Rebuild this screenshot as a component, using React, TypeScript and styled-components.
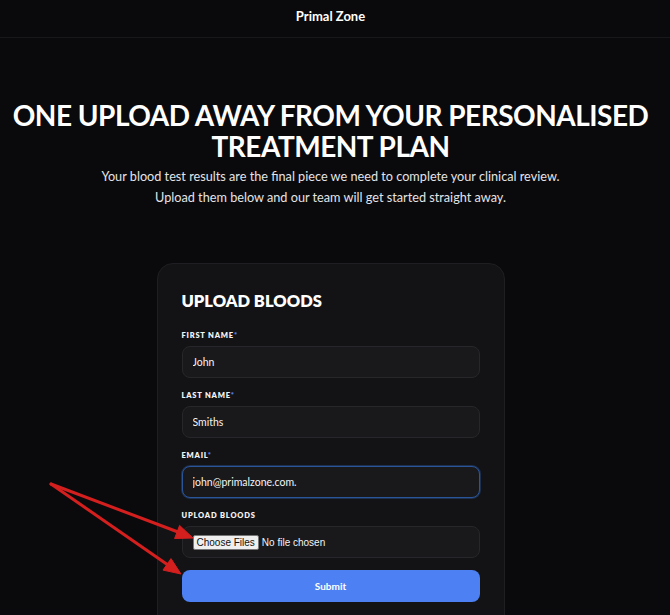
import React from "react";
import styled, { createGlobalStyle } from "styled-components";

const GlobalStyle = createGlobalStyle`
  * { box-sizing: border-box; }
  body {
    margin: 0;
    background: #0a0a0c;
    font-family: "Lato", "Noto Sans", sans-serif;
    color: #fff;
  }
`;

const App = () => {
  return (
    <Page>
      <GlobalStyle />
      <Header>
        <Inner>Primal Zone</Inner>
      </Header>
      <Inner>
        <Hero>
          <Headline>
            One upload away from your personalised
            <br />
            treatment plan
          </Headline>
          <Intro>
            Your blood test results are the final piece we need to complete your clinical review.
            <br />
            Upload them below and our team will get started straight away.
          </Intro>
        </Hero>
        <Card>
          <CardTitle>Upload Bloods</CardTitle>
          <Field>
            <Label>
              First Name<Star>*</Star>
            </Label>
            <TextInput defaultValue="John" />
          </Field>
          <Field>
            <Label>
              Last Name<Star>*</Star>
            </Label>
            <TextInput defaultValue="Smiths" />
          </Field>
          <Field>
            <Label>
              Email<Star>*</Star>
            </Label>
            <TextInput defaultValue="john@primalzone.com." $focused />
          </Field>
          <Field>
            <Label>Upload Bloods</Label>
            <FileBox>
              <FileButton>Choose Files</FileButton>
              <FileText>No file chosen</FileText>
            </FileBox>
          </Field>
          <SubmitButton>Submit</SubmitButton>
        </Card>
      </Inner>
      <Arrows width="670" height="615" viewBox="0 0 670 615">
        <g fill="#d41f1f" stroke="#d41f1f" strokeLinejoin="round">
          <line x1="51" y1="484" x2="178" y2="532" strokeWidth="3" strokeLinecap="round" />
          <polygon points="193,538 174.6,538.5 179.6,525.4" strokeWidth="1" />
          <line x1="51" y1="484" x2="168" y2="565" strokeWidth="3" strokeLinecap="round" />
          <polygon points="181,574 163,570.1 171,558.6" strokeWidth="1" />
        </g>
      </Arrows>
    </Page>
  );
};

export default App;

const Page = styled.div`
  position: relative;
  height: 615px;
  overflow: hidden;
  background: #0a0a0c;
`;

const Inner = styled.div`
  width: 661px;
  display: flex;
  flex-direction: column;
  align-items: center;
`;

const Header = styled.div`
  height: 38px;
  padding-bottom: 6px;
  display: flex;
  align-items: center;
  font-size: 13px;
  font-weight: 700;
  border-bottom: 1px solid #18181b;
`;

const Hero = styled.div`
  padding-top: 62px;
  display: flex;
  flex-direction: column;
  align-items: center;
  text-align: center;
`;

const Headline = styled.h1`
  margin: 0;
  font-size: 28px;
  line-height: 31px;
  font-weight: 700;
  letter-spacing: -0.5px;
  text-transform: uppercase;
  white-space: nowrap;
`;

const Intro = styled.p`
  margin: 4px 0 0;
  font-size: 12.7px;
  line-height: 21px;
  color: #e4e4e7;
`;

const Card = styled.div`
  width: 348px;
  margin-top: 55px;
  padding: 26px 24px 40px;
  background: #131315;
  border: 1px solid #1f1f23;
  border-radius: 16px;
  display: flex;
  flex-direction: column;
  align-self: center;
  align-items: stretch;
`;

const CardTitle = styled.h2`
  margin: 0 0 18px;
  font-size: 16.5px;
  line-height: 22px;
  font-weight: 800;
  text-transform: uppercase;
`;

const Field = styled.div`
  display: flex;
  flex-direction: column;
  gap: 5px;
  margin-bottom: 12px;
`;

const Label = styled.label`
  font-size: 7.5px;
  line-height: 11px;
  font-weight: 800;
  letter-spacing: 0.8px;
  text-transform: uppercase;
  color: #f4f4f5;
`;

const Star = styled.span`
  color: #4f7ff0;
`;

const TextInput = styled.input<{ $focused?: boolean }>`
  height: 32px;
  padding: 0 10px;
  background: #19191c;
  border: 1px solid ${(p) => (p.$focused ? "#2b5599" : "#27272b")};
  box-shadow: ${(p) => (p.$focused ? "0 0 0 1px rgba(43, 85, 153, 0.45)" : "none")};
  border-radius: 8px;
  font-family: "Lato", sans-serif;
  font-size: 10.5px;
  color: #f4f4f5;
  outline: none;
`;

const FileBox = styled.div`
  height: 32px;
  padding: 0 10px;
  display: flex;
  align-items: center;
  gap: 3px;
  background: #19191c;
  border: 1px solid #27272b;
  border-radius: 8px;
  font-family: "Liberation Sans", Arial, sans-serif;
  font-size: 10px;
`;

const FileButton = styled.span`
  padding: 1px 3px;
  background: #efefef;
  color: #111;
  border: 1px solid #767676;
  border-radius: 2px;
  line-height: 11px;
`;

const FileText = styled.span`
  color: #f4f4f5;
`;

const SubmitButton = styled.button`
  height: 32px;
  border: none;
  border-radius: 8px;
  background: #4d80f2;
  color: #fff;
  font-family: "Lato", sans-serif;
  font-size: 10px;
  font-weight: 700;
  cursor: pointer;
`;

const Arrows = styled.svg`
  position: absolute;
  left: 0;
  top: 0;
  pointer-events: none;
`;
